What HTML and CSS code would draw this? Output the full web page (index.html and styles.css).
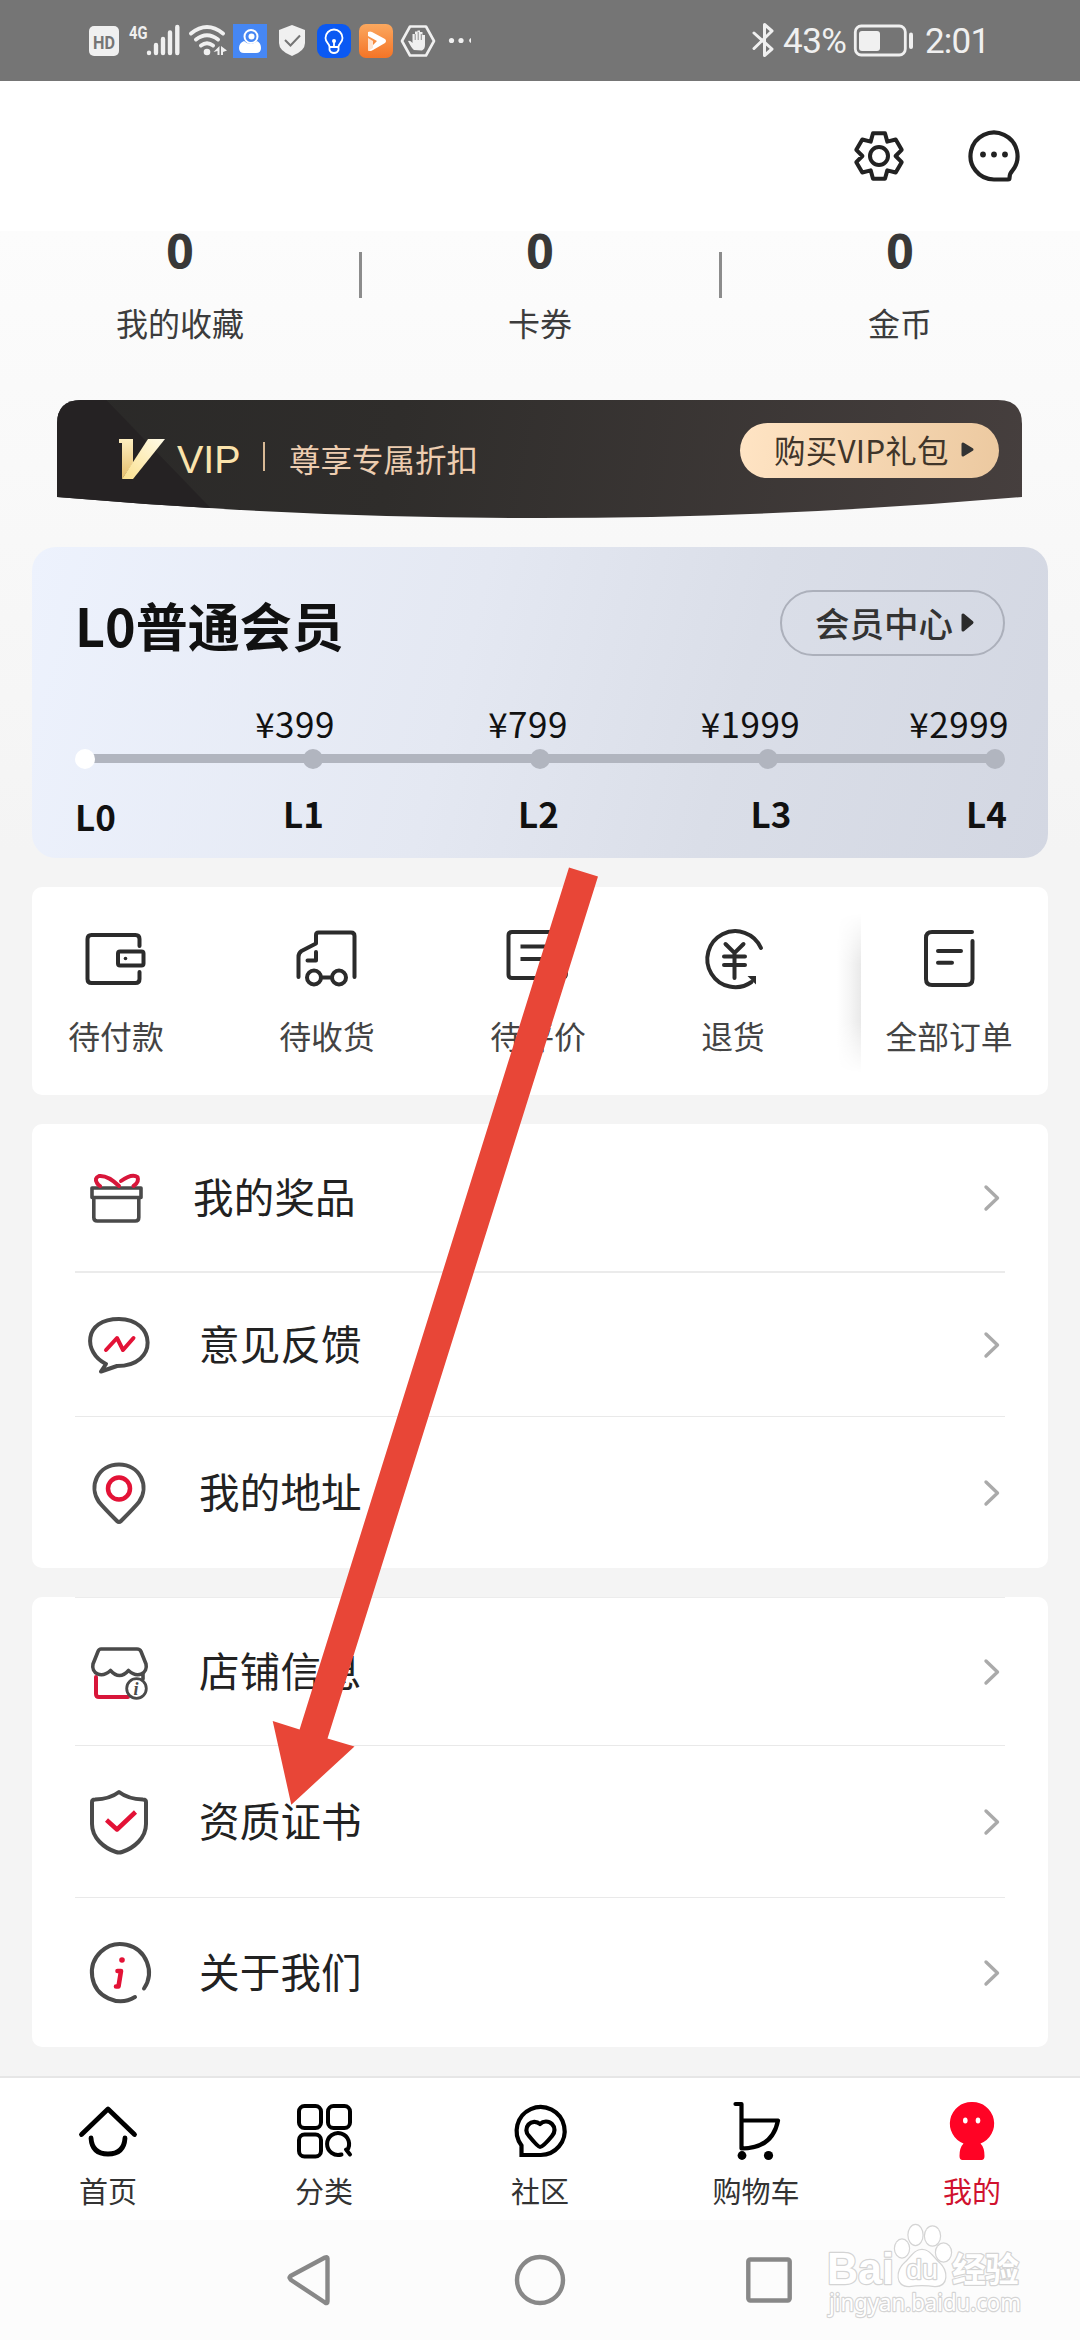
FILE: index.html
```html
<!DOCTYPE html>
<html lang="zh-CN">
<head>
<meta charset="utf-8">
<title>我的</title>
<link rel="stylesheet" href="styles.css">
</head>
<body>
<div class="screen">
  <header class="status">
    <svg class="s-hd" width="30" height="34" viewBox="89 24 30 34"><rect x="89" y="26" width="30" height="30" rx="5" fill="#f0f0f0"/><text x="104" y="48.5" text-anchor="middle" font-family="Roboto, sans-serif" font-weight="700" font-size="18" textLength="22" lengthAdjust="spacingAndGlyphs" fill="#757575">HD</text></svg>
    <svg class="s-sig" width="52" height="34" viewBox="129 24 52 34"><text x="129" y="38.5" font-family="Roboto, sans-serif" font-weight="700" font-size="19" textLength="18.5" lengthAdjust="spacingAndGlyphs" fill="#f0f0f0">4G</text><g stroke="#f0f0f0" stroke-width="4.4" stroke-linecap="round"><path d="M149 52.8v.2M156 45v8M163 39v14M170 32.500v20.500M177.300 27v26"/></g></svg>
    <svg class="s-wifi" width="40" height="34" viewBox="188 24 40 34"><g fill="none" stroke="#f0f0f0" stroke-width="4" stroke-linecap="round"><path d="M191 33.500Q207 20.500 223 33.500M196 39.500Q207 31 218 39.500M201 45.500Q207 41 213 45.500"/></g><circle cx="207" cy="52" r="3.300" fill="#f0f0f0"/><path d="M213.500 52l6-6v9h-2v-4zM221 46v9h2v-3l4-1.500z" fill="#f0f0f0"/></svg>
    <svg class="s-cam" width="34" height="34" viewBox="233 24 34 34"><path fill="#4687f4" d="M233 24h34v34h-34z"/><circle cx="251" cy="36.500" r="6.500" fill="none" stroke="#fff" stroke-width="2"/><circle cx="251.500" cy="36.500" r="3" fill="#fff"/><path fill="#fff" d="M244 41q6 6 13 0q4 2 4 7q0 5-5 5h-12q-5 0-5-5q0-5 5-7z"/></svg>
    <svg class="s-shield" width="28" height="34" viewBox="278 24 28 34"><path fill="#f0f0f0" d="M292 25l13 5v13q0 8-13 13q-13-5-13-13V30z"/><path d="M285 40l5.500 5.500L300 35.500" fill="none" stroke="#757575" stroke-width="2"/></svg>
    <svg class="s-bulb" width="34" height="34" viewBox="317 24 34 34"><rect x="317" y="24" width="34" height="34" rx="9" fill="#0b59f3"/><g fill="none" stroke="#fff" stroke-width="1.800"><path d="M329.500 47c0-4-4-4-4-9a8.500 8.500 0 0 1 17 0c0 5-4 5-4 9zM329.500 47v3q1 3 4.500 3t4.500-3v-3M334 41v6"/></g><circle cx="334" cy="41" r="2" fill="#fff"/></svg>
    <svg class="s-play" width="34" height="34" viewBox="359 24 34 34"><defs><linearGradient id="og" x2="0" y2="1"><stop stop-color="#fba85f"/><stop offset="1" stop-color="#f47426"/></linearGradient></defs><rect x="359" y="24" width="34" height="34" rx="7" fill="url(#og)"/><path d="M368 32v4l9 5-9 9q2 2 5 0l12-7q2-2 0-4l-13-7q-2-1-4 0z" fill="#fff"/><path d="M368 38v13l5-3v-7z" fill="#ffe3cf"/></svg>
    <svg class="s-hex" width="36" height="34" viewBox="400 24 36 34"><path d="M410 26.500h16L434 41l-8 14.500h-16L402 41z" fill="none" stroke="#f0f0f0" stroke-width="2.600" stroke-linejoin="round"/><path d="M414 50q-2-1-6-9q2-1 4.500 2V34h2.500v-2.500h2.500V30.500h2.500v1.500h2.500v3h2.500v10q0 4-3 5.500z" fill="#f0f0f0"/><path d="M415.200 34v6M418.200 32v8M421.300 34v6" stroke="#757575" stroke-width=".8"/></svg>
    <svg class="s-more" width="24" height="34" viewBox="448 24 24 34"><g fill="#f0f0f0"><circle cx="451.500" cy="40.500" r="2.600"/><circle cx="461" cy="40.500" r="2.600"/><path d="M471 38a2.600 2.600 0 0 0 0 5z"/></g></svg>
    <svg class="s-bt" width="24" height="36" viewBox="751 23 24 36"><path d="M754 33l18 16-7.500 6.500v-31L772 31l-18 17.500" fill="none" stroke="#f0f0f0" stroke-width="3" stroke-linecap="round" stroke-linejoin="round"/></svg>
    <span class="pct">43%</span>
    <svg class="s-bat" width="60" height="34" viewBox="854 24 60 34"><rect x="855.300" y="26" width="50" height="29" rx="6" fill="none" stroke="#f0f0f0" stroke-width="2.800"/><rect x="859" y="31" width="21" height="20" rx="3" fill="#f0f0f0"/><rect x="909" y="32.500" width="4" height="16.500" rx="2" fill="#f0f0f0"/></svg>
    <span class="clock">2:01</span>
  </header>

  <div class="topbar">
    <svg width="54" height="54" viewBox="-27 -27 54 54" fill="none" stroke="#222" stroke-width="4" stroke-linejoin="round"><path d="M-8.300-14.400L-6-22.700H6L8.300-14.400 16.700-16.500 22.700-6.200 16.600 0 22.700 6.200 16.700 16.500 8.300 14.400 6 22.700H-6L-8.300 14.400-16.700 16.500-22.700 6.200-16.600 0-22.700-6.200-16.700-16.500z"/><circle r="9"/></svg>
    <svg width="54" height="54" viewBox="966.500 129.500 54 54"><path d="M993.500 180A23.500 23.500 0 1 1 1012 171Q1009 174 1009 178.500Q1009 180 1007.500 180z" fill="none" stroke="#222" stroke-width="4.200" stroke-linejoin="round"/><g fill="#222"><circle cx="982.500" cy="155" r="2.900"/><circle cx="993.500" cy="155" r="2.900"/><circle cx="1004.500" cy="155" r="2.900"/></g></svg>
  </div>

  <main class="content">
    <section class="stats">
      <div class="stat"><b>0</b><span>我的收藏</span></div>
      <div class="stat"><b>0</b><span>卡券</span></div>
      <div class="stat"><b>0</b><span>金币</span></div>
    </section>

    <section class="vip">
      <svg class="vip-v" width="48" height="42" viewBox="118 438 48 42"><defs><linearGradient id="vg" x1="1" x2="0" y2="1"><stop stop-color="#fffbe8"/><stop offset="1" stop-color="#fbe08e"/></linearGradient><linearGradient id="vd" x2="0" y2="1"><stop stop-color="#fdeec0"/><stop offset="1" stop-color="#e5bd6b"/></linearGradient></defs><path fill="url(#vd)" d="M119 439h14v24l-11 16V443h-3z"/><path fill="url(#vg)" d="M148 439h17l-32 40h-11z"/></svg>
      <span class="vip-name">VIP</span><i class="vip-line"></i><span class="vip-text">尊享专属折扣</span>
      <a class="vip-btn">购买VIP礼包<svg width="13" height="17" viewBox="0 0 13 17"><path d="M2 3v11l9-5.500z" fill="#333" stroke="#333" stroke-width="3" stroke-linejoin="round"/></svg></a>
    </section>

    <section class="member">
      <div class="member-head">
        <h1>L0普通会员</h1>
        <a class="member-btn">会员中心<svg width="13" height="21" viewBox="0 0 13 21"><path d="M2 3v15l9-7.500z" fill="#2b2b2b" stroke="#2b2b2b" stroke-width="3" stroke-linejoin="round"/></svg></a>
      </div>
      <div class="prices"><span>¥399</span><span>¥799</span><span>¥1999</span><span>¥2999</span></div>
      <div class="track"><i></i><i></i><i></i><i></i><i></i></div>
      <div class="levels"><span>L0</span><span>L1</span><span>L2</span><span>L3</span><span>L4</span></div>
    </section>

    <section class="orders">
      <div class="order"><svg width="64" height="64" viewBox="84 926 64 64" fill="none" stroke="#2b2b2b" stroke-width="4" stroke-linecap="round" stroke-linejoin="round"><path d="M139.500 946V939q0-4-4-4H91.500q-4 0-4 4v40q0 4 4 4h44q4 0 4-4v-7"/><rect x="118" y="951.500" width="25.500" height="14" rx="2"/><circle cx="125.500" cy="958.500" r="1.800" fill="#2b2b2b" stroke="none"/></svg><span>待付款</span></div>
      <div class="order"><svg width="64" height="64" viewBox="295 926 64 64" fill="none" stroke="#2b2b2b" stroke-width="4" stroke-linecap="round" stroke-linejoin="round"><path d="M298.500 977V957q0-4 3-6l14.500-7.500V935q0-2.500 2.500-2.500H351q3.500 0 3.500 3.500v41M316 952v8.500h-8.500M321.500 977.500h10"/><circle cx="314" cy="977.500" r="7"/><circle cx="339" cy="977.500" r="7"/></svg><span>待收货</span></div>
      <div class="order"><svg width="64" height="64" viewBox="506 926 64 64" fill="none" stroke="#2b2b2b" stroke-width="4" stroke-linejoin="round"><path d="M520 978h-8q-3.500 0-3.500-3.500v-39q0-3.500 3.500-3.500h50q4 0 4 3.500v38q0 4.500-4 4.500zM520.500 946.500h33M520.500 959h25"/></svg><span>待评价</span></div>
      <div class="order"><svg width="64" height="64" viewBox="702 926 64 64" fill="none" stroke="#2b2b2b" stroke-width="4" stroke-linecap="round"><path d="M762 948A28 28 0 1 0 752.500 982M726.500 944l9 9 9-9M735.500 953v25M725 956.500h21M725 965h21"/><path d="M748.500 976h8.500v8.500z" fill="#2b2b2b" stroke="none"/></svg><span>退货</span></div>
      <div class="all-orders"><div class="order"><svg width="64" height="64" viewBox="916 926 64 64" fill="none" stroke="#2b2b2b" stroke-width="4" stroke-linecap="round" stroke-linejoin="round"><path d="M971 932h-40q-6 0-6 6v41q0 6 6 6h34q6.500 0 6.500-6v-38M937 951h23M937 962.700h14"/></svg><span>全部订单</span></div></div>
    </section>

    <section class="list list-a">
      <a class="row first"><svg class="ico" width="66" height="66" viewBox="83 1164 66 66" fill="none" stroke="#4a4a4a" stroke-width="3.600" stroke-linejoin="round"><path d="M92 1187h49v9.500H92zM93.800 1196.500v20q0 3.500 3.500 3.500h38q3.500 0 3.500-3.500v-20"/><path d="M119 1185Q108 1174 99 1175Q94 1177 97 1182Q98 1184 100 1185M121 1180Q132 1172 137.500 1176Q139.500 1181 133.500 1185" stroke="#d8163a" stroke-width="4" stroke-linecap="round"/></svg><span>我的奖品</span><svg class="chev" width="18" height="28" viewBox="0 0 18 28"><path d="M3 3l11.500 11L3 25"/></svg></a>
      <a class="row"><svg class="ico" width="66" height="66" viewBox="86 1311 66 66" fill="none" stroke="#4a4a4a" stroke-width="4" stroke-linejoin="round" stroke-linecap="round"><path d="M106 1363C83 1352 83 1318 119 1318C156 1318 159 1365 117 1365L101 1370.500z"/><path d="M106 1349l11-12 6 12 10.500-12" stroke="#e31236"/></svg><span>意见反馈</span><svg class="chev" width="18" height="28" viewBox="0 0 18 28"><path d="M3 3l11.500 11L3 25"/></svg></a>
      <a class="row"><svg class="ico" width="66" height="66" viewBox="86 1460 66 66" fill="none" stroke="#505050" stroke-width="4" stroke-linejoin="round"><path d="M119 1464.500C98 1464.500 88 1486 99 1502Q103 1507 117 1521Q119 1523 121 1521Q135 1507 139 1502C150 1486 140 1464.500 119 1464.500z"/><circle cx="119" cy="1488.500" r="11" stroke="#e31236" stroke-width="4.500"/></svg><span>我的地址</span><svg class="chev" width="18" height="28" viewBox="0 0 18 28"><path d="M3 3l11.500 11L3 25"/></svg></a>
    </section>

    <section class="list list-b">
      <a class="row"><svg class="ico" width="66" height="66" viewBox="86 1639 66 66" fill="none" stroke="#4a4a4a" stroke-width="3.600" stroke-linejoin="round" stroke-linecap="round"><path d="M96 1677v17q0 3 3 3h29" stroke="#d8163a" stroke-width="4"/><path d="M101 1649h36q3 0 4 2.500l5 12.500c2 9-8 15-17.500 6.500q-9 10-18 0C101 1679 91 1673 93 1664l5-12.500q1-2.500 3-2.500zM143 1674v5"/><circle cx="136.500" cy="1688.500" r="9.800" stroke-width="2.800" fill="#fff"/><text x="136" y="1695" text-anchor="middle" font-family="Liberation Serif, serif" font-size="18" font-style="italic" font-weight="700" fill="#4a4a4a" stroke="none">i</text></svg><span>店铺信息</span><svg class="chev" width="18" height="28" viewBox="0 0 18 28"><path d="M3 3l11.500 11L3 25"/></svg></a>
      <a class="row"><svg class="ico" width="66" height="66" viewBox="86 1789 66 66" fill="none" stroke="#4a4a4a" stroke-width="4" stroke-linejoin="round"><path d="M119 1792Q128 1799 143 1799.500Q146 1799.500 146 1802V1824C146 1838 134 1848 122 1852Q119 1853 116 1852C104 1848 92 1838 92 1824V1802Q92 1799.500 95 1799.500Q110 1799 119 1792z"/><path d="M106.500 1820l10.500 9.500 18.500-17.500" stroke="#e31236" stroke-width="4.500"/></svg><span>资质证书</span><svg class="chev" width="18" height="28" viewBox="0 0 18 28"><path d="M3 3l11.500 11L3 25"/></svg></a>
      <a class="row"><svg class="ico" width="66" height="66" viewBox="86 1939.500 66 66" fill="none" stroke="#4a4a4a" stroke-width="4" stroke-linecap="round"><path d="M144 1988A28.500 28.500 0 1 0 135 1996.500"/><path d="M117.500 1970.500h3.500l-2.500 15.500h-2.500" stroke="#e31236" stroke-width="4.600" stroke-linejoin="round"/><circle cx="122" cy="1959.500" r="2.800" fill="#e31236" stroke="none"/></svg><span>关于我们</span><svg class="chev" width="18" height="28" viewBox="0 0 18 28"><path d="M3 3l11.500 11L3 25"/></svg></a>
    </section>
  </main>

  <nav class="tabs">
    <a><svg width="64" height="64" viewBox="76 2099 64 64" fill="none" stroke="#000" stroke-width="4.800" stroke-linecap="round" stroke-linejoin="round"><path d="M81.500 2134.500L108 2109l26.500 25.500M91 2138q1 16 17 16t17-16"/></svg><span>首页</span></a>
    <a><svg width="64" height="64" viewBox="292 2099 64 64" fill="none" stroke="#000" stroke-width="4" stroke-linecap="round"><rect x="299" y="2106" width="22" height="22" rx="5.500"/><rect x="328" y="2106" width="22" height="22" rx="5.500"/><rect x="299" y="2134.500" width="22" height="22" rx="5.500"/><path d="M341.500 2154.500A11 11 0 1 1 347 2150.500M346 2149.500l4 5"/></svg><span>分类</span></a>
    <a><svg width="64" height="64" viewBox="508 2099 64 64" fill="none" stroke="#000" stroke-width="4.200"><path d="M521.500 2155V2145.500A24 24 0 1 1 540 2155z"/><path d="M540 2147q-2 0-11-11a7.800 7.800 0 0 1 11-12a7.800 7.800 0 0 1 12 12q-9 11-12 11z" stroke-linejoin="round"/></svg><span>社区</span></a>
    <a><svg width="64" height="64" viewBox="724 2099 64 64" fill="none" stroke="#000" stroke-width="4.200" stroke-linecap="round" stroke-linejoin="round"><path d="M735.500 2104h6v44.500q31 0 36.500-28h-36"/><circle cx="742" cy="2155.500" r="4.400" fill="#000" stroke="none"/><circle cx="768.500" cy="2155.500" r="4.600" fill="#000" stroke="none"/></svg><span>购物车</span></a>
    <a class="active"><svg width="64" height="64" viewBox="939.500 2099 64 64"><path fill="#ff0325" d="M971.500 2102a21.500 21.500 0 0 1 8.500 41.500q4 4 4 12.500q0 4-3 4h-19q-3 0-3-4q0-8.500 4-12.500a21.500 21.500 0 0 1 8.500-41.500z"/><ellipse cx="964.800" cy="2120.500" rx="2.300" ry="3" fill="#fff"/><ellipse cx="977.500" cy="2120.500" rx="2.300" ry="3" fill="#fff"/></svg><span>我的</span></a>
  </nav>

  <footer class="sysnav">
    <svg width="56" height="56" viewBox="280 2252 56 56" fill="none" stroke="#888" stroke-width="4.400" stroke-linejoin="round"><path d="M290 2278.500q-1-1 .5-2.500L325 2257.500q2.500-1 2.500 1v43q0 2.500-2.500 1L291 2280z"/></svg>
    <svg width="56" height="56" viewBox="-28 -28 56 56"><circle r="23" fill="none" stroke="#888" stroke-width="4.400"/></svg>
    <svg width="56" height="56" viewBox="-28 -28 56 56"><rect x="-20.700" y="-20.500" width="41.400" height="41" rx="2" fill="none" stroke="#888" stroke-width="4.400"/></svg>
  </footer>

  <svg class="watermark" width="206" height="108" viewBox="822 2218 206 108" fill="#fff" stroke="#d4d4d4" stroke-width="2.400" paint-order="stroke" stroke-linejoin="round">
    <text x="827" y="2284" font-family="Liberation Sans, sans-serif" font-weight="700" font-size="45" textLength="67" lengthAdjust="spacingAndGlyphs">Bai</text>
    <g stroke-width="2.400"><ellipse cx="902" cy="2248.500" rx="7" ry="9"/><ellipse cx="915.500" cy="2235" rx="7" ry="10"/><ellipse cx="932.500" cy="2236" rx="7.500" ry="9.500"/><ellipse cx="943.500" cy="2252.500" rx="7.500" ry="9"/>
    <path d="M922 2250c8 0 11 8 17 13c9 8 9 23-4 23q-13-2-26 0c-13 0-13-15-4-23c6-5 9-13 17-13z"/></g>
    <text x="906" y="2279" font-family="Liberation Sans, sans-serif" font-size="27" textLength="32" lengthAdjust="spacingAndGlyphs">du</text>
    <text x="952" y="2282" font-family="Noto Sans CJK SC, sans-serif" font-weight="700" font-size="34" textLength="67">经验</text>
    <text x="829" y="2311" font-family="Noto Sans, sans-serif" font-size="24" textLength="192" lengthAdjust="spacingAndGlyphs">jingyan.baidu.com</text>
  </svg>
  <svg class="arrow" width="340" height="950" viewBox="265 860 340 950"><path fill="#e84637" d="M569 867.500L598 876.500 327.500 1738.500 354.500 1746.500 291.300 1804.700 272.700 1721 299.600 1729.500z"/></svg>
</div>
</body>
</html>
```
FILE: styles.css
```css
* { box-sizing: border-box; }
body {
  margin: 0;
  font-family: "Noto Sans CJK SC", "Noto Sans", sans-serif;
  color: #222;
}
svg { display: block; flex: none; overflow: visible; }
.screen {
  position: relative;
  display: flex;
  flex-direction: column;
  width: 1080px;
  height: 2340px;
  overflow: hidden;
  background: #f4f4f4;
}

/* system status bar */
.status {
  display: flex;
  align-items: flex-start;
  height: 81px;
  padding: 24px 0 0 89px;
  background: #757575;
  color: #f0f0f0;
  font: 35px/34px Roboto, sans-serif;
}
.s-sig { margin-left: 10px; }
.s-wifi { margin-left: 7px; }
.s-cam { margin-left: 5px; }
.s-shield, .s-bulb { margin-left: 11px; }
.s-play { margin-left: 8px; }
.s-hex { margin-left: 7px; }
.s-more { margin-left: 12px; }
.s-bt { margin: -1px 0 0 279px; }
.pct { width: 71px; margin-left: 8px; padding-top: 1px; letter-spacing: -0.5px; }
.clock { margin-left: 11px; padding-top: 1px; letter-spacing: -0.8px; }

.topbar {
  display: flex;
  align-items: center;
  justify-content: flex-end;
  gap: 61px;
  height: 150px;
  padding-right: 59.5px;
  background: #fff;
}

.content {
  height: 1845px;
  background: linear-gradient(#fcfcfc, #f4f4f4 620px);
}

/* counters */
.stats { display: grid; grid-template-columns: repeat(3, 1fr); height: 169px; }
.stat {
  position: relative;
  display: flex;
  flex-direction: column;
  align-items: center;
}
.stat b {
  margin-top: -4px;
  font: 700 48px/48px "Noto Sans", sans-serif;
  color: #383838;
}
.stat span { margin-top: 25px; font-size: 32px; line-height: 44px; color: #3c3c3c; }
.stat + .stat::before {
  content: "";
  position: absolute;
  left: -1px;
  top: 21px;
  width: 3px;
  height: 46px;
  background: #8c8c8c;
}

/* VIP banner */
.vip {
  display: flex;
  align-items: flex-start;
  width: 965px;
  height: 118px;
  margin-left: 57px;
  padding-left: 61px;
  background:
    linear-gradient(46deg, #252223 0, #252223 117px, transparent 118px),
    linear-gradient(100deg, #2a2928, #2f2d2b 35%, #463f3e);
  clip-path: path("M0 24Q0 0 24 0H941Q965 0 965 24V97Q482.500 139 0 97Z");
}
.vip-v { margin-top: 38px; }
.vip-name {
  margin: 37px 0 0 11px;
  width: 64px;
  font: 39.500px/44px "Liberation Sans", sans-serif;
  color: #fbe3ac;
}
.vip-line { width: 2px; height: 29px; margin: 42px 0 0 22px; background: #d8b995; }
.vip-text { margin: 36px 0 0 24px; width: 192px; font-size: 31.5px; line-height: 44px; color: #edcdb0; white-space: nowrap; }
.vip-btn {
  display: flex;
  align-items: center;
  width: 259px;
  height: 55px;
  margin: 23px 23px 0 auto;
  padding: 0 25px 0 34px;
  justify-content: space-between;
  border-radius: 28px;
  background: linear-gradient(100deg, #ffe4c4, #ecc9a0);
  font-size: 31.5px;
  line-height: 51px;
  padding-bottom: 2px;
  color: #40352a;
  letter-spacing: 0.2px;
  white-space: nowrap;
}

/* membership level */
.member {
  width: 1016px;
  height: 311px;
  margin: 29px 0 0 32px;
  padding: 0 41px 0 42px;
  border-radius: 24px;
  background: linear-gradient(105deg, #edf2fd, #e4e8f2 42%, #dadee8 68%, #d3d7e2);
  color: #111;
}
.member-head { display: flex; justify-content: space-between; height: 153px; padding-top: 43px; }
h1 { margin: -5px 0 0 1px; font-size: 52px; font-weight: 700; line-height: 80px; }
.member-btn {
  display: flex;
  align-items: center;
  width: 225px;
  height: 66px;
  margin-right: 2px;
  padding: 0 29px 2px 33px;
  justify-content: space-between;
  border: 2.5px solid #acb0bb;
  border-radius: 34px;
  font-size: 34.5px;
  font-weight: 500;
  line-height: 50px;
  color: #333;
}
.prices {
  display: grid;
  grid-template-columns: 230px 236px 209px 154px;
  margin: -2px 0 0 106px;
  text-align: center;
  font-size: 35px;
  line-height: 50px;
  letter-spacing: 0.5px;
}
.prices span:last-child { text-align: right; }
.track {
  display: flex;
  justify-content: space-between;
  height: 20px;
  margin: 1px 2px 0 1px;
  background: linear-gradient(#b1b5bf, #b1b5bf) 10px 5px / 905px 9px no-repeat;
}
.track i { width: 20px; height: 20px; border-radius: 50%; background: #b1b5bf; }
.track i:first-child { background: #fff; }
.levels {
  display: grid;
  grid-template-columns: 120px 219px 251px 214px 129px;
  margin-top: 19px;
  text-align: center;
  font-size: 35px;
  font-weight: 700;
  line-height: 50px;
}
.levels span:first-child { margin: 3px 0 0 1px; text-align: left; }
.levels span:last-child { text-align: right; }

/* orders */
.orders {
  display: grid;
  grid-template-columns: 168px 254px 168px 222px 187px;
  width: 1016px;
  height: 208px;
  margin: 29px 0 0 32px;
  border-radius: 10px;
  background: #fff;
}
.order { display: flex; flex-direction: column; align-items: center; padding-top: 39px; }
.order span { margin-top: 23px; font-size: 31.8px; line-height: 44px; color: #444; white-space: nowrap; }
.all-orders {
  width: 176px;
  height: 208px;
  margin-left: 17px;
  background: #fff;
  position: relative;
}
.all-orders::before {
  content: "";
  position: absolute;
  left: -24px;
  top: 26px;
  width: 24px;
  height: 160px;
  background: linear-gradient(270deg, #e9e9e9, #f5f5f5 45%, #fff);
  -webkit-mask-image: linear-gradient(transparent, #000 32%, #000 68%, transparent);
  mask-image: linear-gradient(transparent, #000 32%, #000 68%, transparent);
}

/* menu lists */
.list { width: 1016px; margin: 29px 0 0 32px; border-radius: 10px; background: #fff; }
.row { display: flex; align-items: center; margin: 0 43px; padding: 0 4px 0 11px; border-bottom: 1px solid #e9e9e9; }
.row span { margin: -3px 0 0 47px; font-size: 40.5px; line-height: 60px; letter-spacing: 0.2px; }
.row.first .ico { margin-left: -3px; }
.row.first span { margin-left: 44px; }
.row:last-child { border-bottom: 0; }
.chev { margin-left: auto; fill: none; stroke: #aaa; stroke-width: 3.4; stroke-linecap: round; stroke-linejoin: round; }
.list-a .row { height: 144px; }
.list-a .row.first { height: 149px; border-bottom: 2px solid #ebebeb; }
.list-a .row:last-child { height: 151px; }
.list-b .row { height: 152px; }
.list-b .row:first-child { height: 149px; border-top: 1px solid #ececec; }
.list-b .row:last-child { height: 149px; }

/* tabs */
.tabs {
  display: grid;
  grid-template-columns: repeat(5, 1fr);
  height: 144px;
  border-top: 2px solid #e6e6e6;
  background: #fff;
}
.tabs a { display: flex; flex-direction: column; align-items: center; padding-top: 21px; }
.tabs span { margin-top: 7px; font-size: 29px; line-height: 40px; color: #333; }
.tabs .active span { color: #d0122f; }

.sysnav {
  display: flex;
  align-items: center;
  height: 120px;
  padding-left: 280px;
  gap: 176px;
  background: #fcfcfc;
}
.sysnav svg:last-child { margin-left: -3px; }

.watermark { position: absolute; left: 822px; top: 2218px; }
.arrow { position: absolute; left: 265px; top: 860px; }
```
